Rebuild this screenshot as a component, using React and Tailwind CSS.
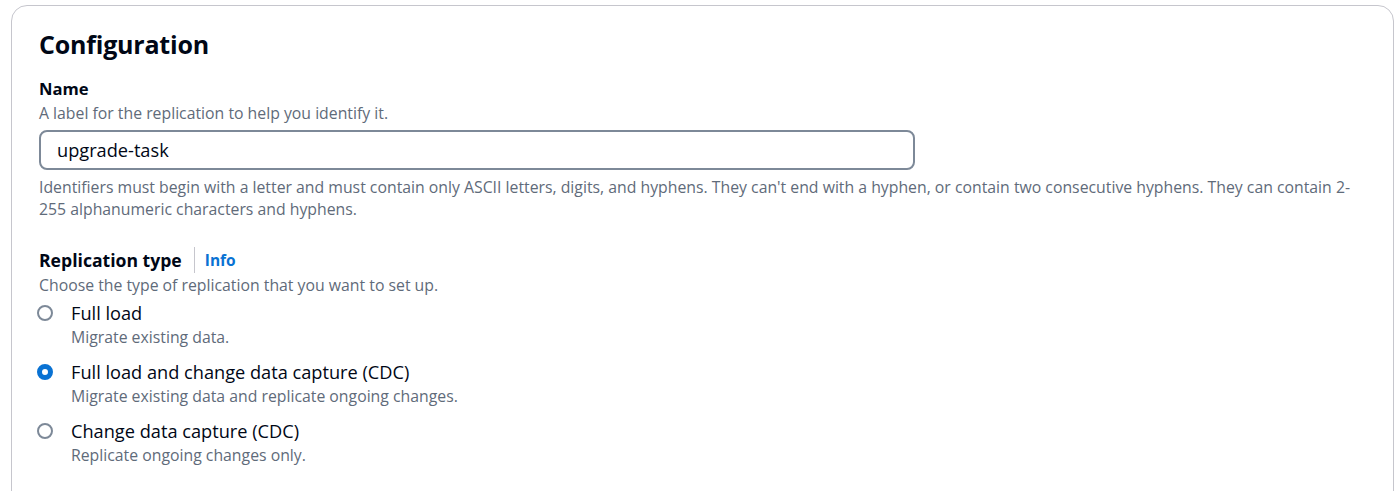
// Configuration panel — replication name + replication type radios
import React, { useState } from 'react';

const OPTIONS = [
  { id: 'full-load', label: 'Full load', desc: 'Migrate existing data.' },
  { id: 'full-load-cdc', label: 'Full load and change data capture (CDC)', desc: 'Migrate existing data and replicate ongoing changes.' },
  { id: 'cdc', label: 'Change data capture (CDC)', desc: 'Replicate ongoing changes only.' },
];

function Radio({ checked }) {
  return checked ? (
    <span className="-ml-[2px] mt-[3px] h-4 w-4 shrink-0 rounded-full border-[5px] border-[#0972d3] bg-white" />
  ) : (
    <span className="-ml-[2px] mt-[3px] h-4 w-4 shrink-0 rounded-full border-2 border-[#7d8998] bg-white" />
  );
}

export default function App() {
  const [name, setName] = useState('upgrade-task');
  const [type, setType] = useState('full-load-cdc');

  return (
    <div className="h-[491px] overflow-hidden bg-white pt-[5px] pl-[11px] pr-[3px] font-['Open_Sans',sans-serif] text-[#000716]">
      <div className="h-[600px] rounded-t-[16px] border border-[#c6c6cd] pt-[22px] pl-[27px] pr-[10px]">
        <h2 className="text-[25px] font-bold leading-[32px] tracking-[-0.2px]">Configuration</h2>

        {/* Name */}
        <div className="mt-[18px]">
          <div className="text-[16.6px] font-bold leading-[22px]">Name</div>
          <div className="mt-[3px] text-[15.8px] leading-[20px] text-[#5f6b7a]">A label for the replication to help you identify it.</div>
          <input
            value={name}
            onChange={e => setName(e.target.value)}
            className="mt-[7px] block h-[40px] w-[876px] rounded-[8px] border-2 border-[#7d8998] px-[16px] text-[18.2px] text-[#000716] outline-none"
          />
          <p className="mt-[6px] whitespace-nowrap text-[15.8px] leading-[22px] text-[#5f6b7a]">
            Identifiers must begin with a letter and must contain only ASCII letters, digits, and hyphens. They can't end with a hyphen, or contain two consecutive hyphens. They can contain 2-<br />
            255 alphanumeric characters and hyphens.
          </p>
        </div>

        {/* Replication type */}
        <div className="mt-[27px]">
          <div className="flex items-center">
            <span className="text-[17.6px] font-bold leading-[22px]">Replication type</span>
            <span className="ml-[12px] mr-[10px] h-[26px] w-px bg-[#c6c6cd]" />
            <a className="text-[15.5px] font-bold leading-[22px] text-[#0972d3]">Info</a>
          </div>
          <div className="mt-[2px] text-[15.8px] leading-[20px] text-[#5f6b7a]">Choose the type of replication that you want to set up.</div>

          <div className="mt-[7px] flex flex-col gap-[14px]">
            {OPTIONS.map(o => (
              <label key={o.id} className="flex cursor-pointer gap-[18px]" onClick={() => setType(o.id)}>
                <Radio checked={type === o.id} />
                <div>
                  <div className="text-[18.2px] leading-[22px]">{o.label}</div>
                  <div className="mt-[3px] text-[15.8px] leading-[20px] text-[#5f6b7a]">{o.desc}</div>
                </div>
              </label>
            ))}
          </div>
        </div>
      </div>
    </div>
  );
}
